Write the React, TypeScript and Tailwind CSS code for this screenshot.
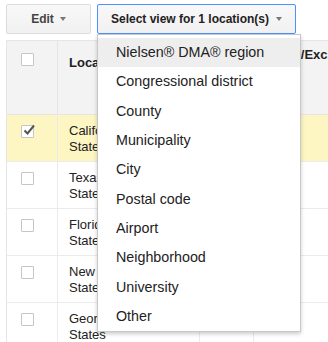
import * as React from 'react';

const views = [
  'Nielsen® DMA® region',
  'Congressional district',
  'County',
  'Municipality',
  'City',
  'Postal code',
  'Airport',
  'Neighborhood',
  'University',
  'Other'
];

const rows = [
  { name: 'California, United States', checked: true },
  { name: 'Texas, United States', checked: false },
  { name: 'Florida, United States', checked: false },
  { name: 'New York, United States', checked: false },
  { name: 'Georgia, United States', checked: false }
];

const Caret: React.FC = () => (
  <span className="inline-block w-0 h-0 border-x-[3px] border-x-transparent border-t-[4px] border-t-[#777]" />
);

const Checkbox: React.FC<{ checked?: boolean }> = ({ checked }) => (
  <span className="relative block w-[13px] h-[13px] border border-[#c6c6c6] rounded-[1px] bg-white">
    {checked && (
      <svg className="absolute -top-[2px] left-0" width="14" height="13" viewBox="0 0 14 13">
        <path d="M2.5 6.5 L5.5 9.5 L12 1.5" fill="none" stroke="#555" strokeWidth="2" />
      </svg>
    )}
  </span>
);

export default function App() {
  return (
    <div className="relative w-[328px] h-[342px] overflow-hidden bg-white font-['Liberation_Sans',Arial,sans-serif] text-[#222]">
      <div className="flex gap-[6px] pl-[6px] pt-[4px]">
        <button className="flex items-center justify-center gap-[6px] w-[85px] h-[30px] rounded-[2px] border border-[#dcdcdc] bg-gradient-to-b from-[#f8f8f8] to-[#f1f1f1] text-[12px] font-bold text-[#444]">
          Edit
          <Caret />
        </button>
        <div className="relative">
          <button className="flex items-center justify-center gap-[7px] w-[199px] h-[30px] rounded-[2px] border border-[#4d90fe] bg-gradient-to-b from-[#f8f8f8] to-[#f1f1f1] text-[12px] font-bold text-[#222]">
            Select view for 1 location(s)
            <Caret />
          </button>
          <div className="absolute left-0 top-[30px] z-10 w-[204px] pt-[3px] bg-white border border-[#c8c8c8] shadow-[0_2px_4px_rgba(0,0,0,0.2)]">
            {views.map((v, i) => (
              <div
                key={v}
                className={`flex items-center h-[29.33px] pl-[18px] text-[14.3px] text-[#222] ${i === 0 ? 'bg-[#eeeeee]' : ''}`}
              >
                {v}
              </div>
            ))}
          </div>
        </div>
      </div>

      <div className="mt-[6px] ml-[6px] border-l border-t border-[#e5e5e5]">
        <div className="grid grid-cols-[51px_142px_54px_1fr] h-[74px] bg-[#f3f3f3] border-b border-[#e5e5e5]">
          <div className="pl-[14px] pt-[12px] border-r border-[#e5e5e5]">
            <Checkbox />
          </div>
          <div className="pl-[11px] pt-[14px] text-[13px] leading-[16px] font-bold border-r border-[#e5e5e5]">
            Location
          </div>
          <div className="border-r border-[#e5e5e5]" />
          <div className="pl-[8px] pt-[6px] text-[13px] leading-[16px] font-bold whitespace-nowrap">
            Target/Excluded
          </div>
        </div>
        {rows.map((r) => (
          <div
            key={r.name}
            className={`grid grid-cols-[51px_142px_54px_1fr] h-[47px] border-b border-[#ebebeb] ${r.checked ? 'bg-[#fdf6c3]' : 'bg-white'}`}
          >
            <div className="pl-[14px] pt-[10px] border-r border-[#ebebeb]">
              <Checkbox checked={r.checked} />
            </div>
            <div className="pl-[11px] pr-[12px] pt-[8px] text-[13px] leading-[16px] border-r border-[#ebebeb]">
              {r.name}
            </div>
            <div className="border-r border-[#ebebeb]" />
            <div />
          </div>
        ))}
      </div>
    </div>
  );
}
